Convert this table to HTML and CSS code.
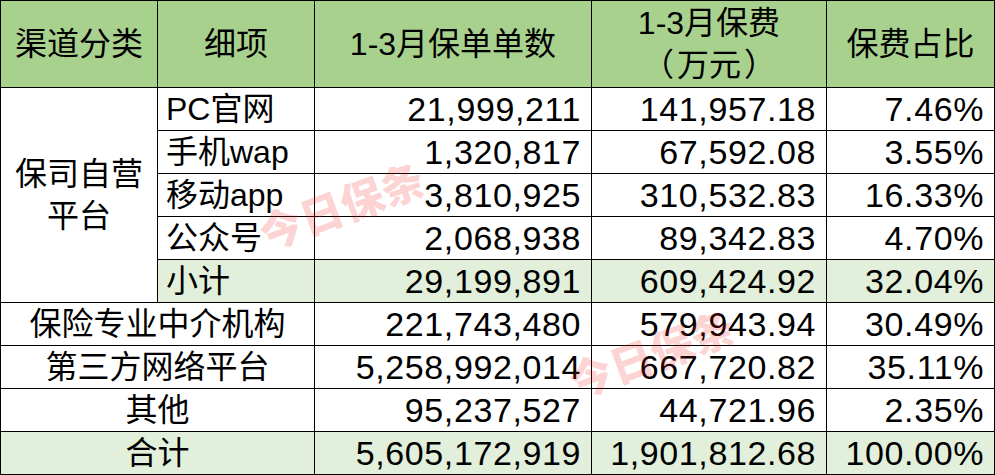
FILE: index.html
```html
<!DOCTYPE html>
<html lang="zh-CN">
<head>
<meta charset="utf-8">
<title>1-3月保费渠道统计</title>
<link rel="stylesheet" href="styles.css">
</head>
<body>
<div class="sheet">
  <table class="data">
    <colgroup>
      <col class="c1"><col class="c2"><col class="c3"><col class="c4"><col class="c5">
    </colgroup>
    <thead>
      <tr class="head">
        <th>渠道分类</th>
        <th>细项</th>
        <th>1-3月保单单数</th>
        <th>1-3月保费<br><span class="unit">（ 万元 ）</span></th>
        <th>保费占比</th>
      </tr>
    </thead>
    <tbody>
      <tr>
        <td class="group" rowspan="5">保司自营<br>平台</td>
        <td class="item">PC官网</td>
        <td class="num">21,999,211</td>
        <td class="num">141,957.18</td>
        <td class="num">7.46%</td>
      </tr>
      <tr>
        <td class="item">手机wap</td>
        <td class="num">1,320,817</td>
        <td class="num">67,592.08</td>
        <td class="num">3.55%</td>
      </tr>
      <tr>
        <td class="item">移动app</td>
        <td class="num">3,810,925</td>
        <td class="num">310,532.83</td>
        <td class="num">16.33%</td>
      </tr>
      <tr>
        <td class="item">公众号</td>
        <td class="num">2,068,938</td>
        <td class="num">89,342.83</td>
        <td class="num">4.70%</td>
      </tr>
      <tr class="sum">
        <td class="item">小计</td>
        <td class="num">29,199,891</td>
        <td class="num">609,424.92</td>
        <td class="num">32.04%</td>
      </tr>
      <tr>
        <td class="label" colspan="2">保险专业中介机构</td>
        <td class="num">221,743,480</td>
        <td class="num">579,943.94</td>
        <td class="num">30.49%</td>
      </tr>
      <tr>
        <td class="label" colspan="2">第三方网络平台</td>
        <td class="num">5,258,992,014</td>
        <td class="num">667,720.82</td>
        <td class="num">35.11%</td>
      </tr>
      <tr>
        <td class="label" colspan="2">其他</td>
        <td class="num">95,237,527</td>
        <td class="num">44,721.96</td>
        <td class="num">2.35%</td>
      </tr>
      <tr class="sum">
        <td class="label" colspan="2">合计</td>
        <td class="num">5,605,172,919</td>
        <td class="num">1,901,812.68</td>
        <td class="num">100.00%</td>
      </tr>
    </tbody>
  </table>
  <span class="mark mark-a">今日保条</span>
  <span class="mark mark-b">今日保条</span>
</div>
</body>
</html>
```

FILE: styles.css
```css
html, body {
  margin: 0;
  padding: 0;
  background: #fff;
}

body {
  font-family: "Liberation Sans", "Noto Sans CJK SC", sans-serif;
  color: #000;
}

.sheet {
  position: relative;
  width: 995px;
  height: 475px;
  overflow: hidden;
}

.data {
  border-collapse: collapse;
  table-layout: fixed;
  width: 994px;
  font-size: 32px;
  line-height: 42px;
}

.c1 { width: 157px; }
.c2 { width: 157px; }
.c3 { width: 277px; }
.c4 { width: 235px; }
.c5 { width: 168px; }

.data th,
.data td {
  border: 1px solid #000;
  padding: 0;
  vertical-align: middle;
  font-weight: normal;
  white-space: nowrap;
}

.head {
  height: 87px;
  background: #a9d18e;
}

.head th {
  text-align: center;
}

.unit {
  word-spacing: -6px;
}

.data tbody tr {
  height: 43px;
}

.sum td {
  background: #e2efda;
}

.group {
  text-align: center;
  background: #fff;
}

.item {
  text-align: left;
  padding-left: 8px !important;
}

.label {
  text-align: center;
}

.num {
  text-align: right;
  padding-right: 10px !important;
  font-size: 34px;
  letter-spacing: 0.6px;
}

.mark {
  position: absolute;
  font-family: "Noto Sans CJK SC", sans-serif;
  font-weight: 900;
  font-size: 43px;
  line-height: 1;
  color: rgba(245, 30, 30, 0.2);
  transform: rotate(-20deg);
  transform-origin: center;
  pointer-events: none;
  white-space: nowrap;
}

.mark-a {
  left: 255px;
  top: 183px;
}

.mark-b {
  left: 565px;
  top: 331px;
}
```
